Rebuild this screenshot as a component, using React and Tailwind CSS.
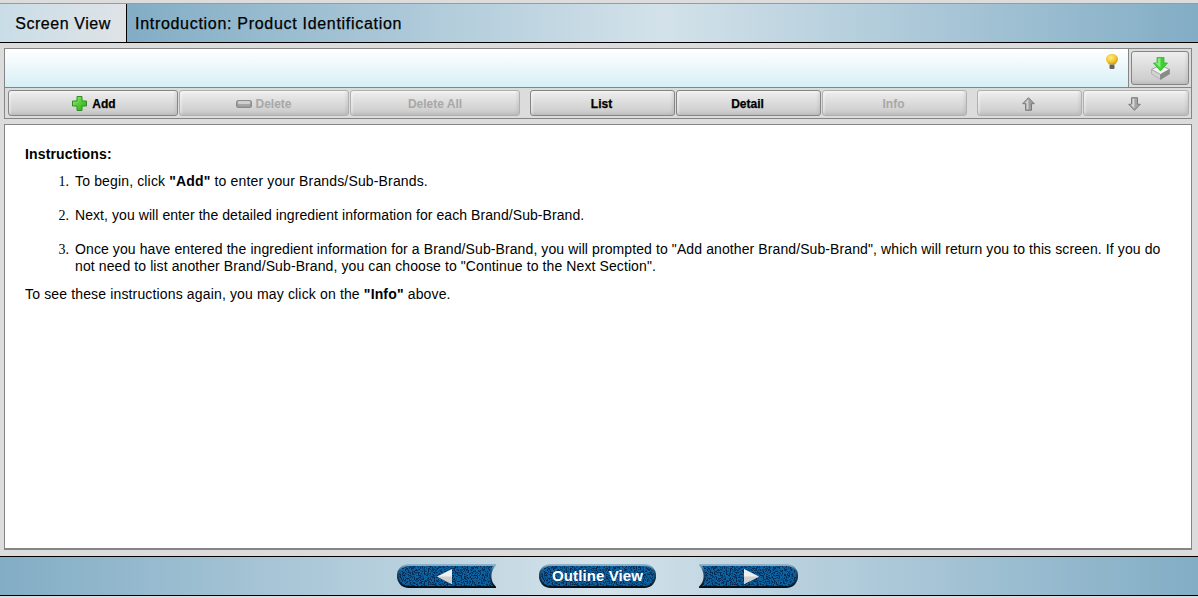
import React from 'react';

const FONT = "font-['Liberation_Sans',Arial,sans-serif]";

const BTN_ON = 'text-black border-[#858585]';
const BTN_OFF = 'text-[#a8a8a8] border-[#b0b0b0]';

function PlusIcon() {
  return (
    <svg width="15" height="15" viewBox="0 0 15 15">
      <defs>
        <linearGradient id="plusFill" x1="0" y1="0" x2="1" y2="1">
          <stop offset="0" stopColor="#a4ee7c" />
          <stop offset="0.5" stopColor="#4fd02e" />
          <stop offset="1" stopColor="#2fa51e" />
        </linearGradient>
      </defs>
      <path d="M5 .5h5v4.500h4.500v5h-4.500v4.500h-5v-4.500h-4.500v-5h4.500z" fill="url(#plusFill)" stroke="#2f8f24" />
    </svg>
  );
}

function MinusIcon() {
  return (
    <svg width="16" height="8" viewBox="0 0 16 8">
      <rect x="0" y="0" width="16" height="8" rx="2.500" fill="#8c8c8c" />
      <rect x="1.500" y="1" width="13" height="3" rx="1.500" fill="#cfcfcf" />
      <rect x="1.500" y="4" width="13" height="2.500" rx="1" fill="#a5a5a5" />
    </svg>
  );
}

function UpArrow() {
  return (
    <svg width="13" height="14" viewBox="0 0 13 14">
      <path d="M6.500 .7l5.800 6h-2.800v6.600h-6v-6.600h-2.800z" fill="#9d9d9d" stroke="#7c7c7c" />
      <path d="M6.500 2l-3.800 4h1.800v6.300h2z" fill="#d2d2d2" />
    </svg>
  );
}

function DownArrow() {
  return (
    <svg width="13" height="14" viewBox="0 0 13 14">
      <path d="M3.500 .7h6v6.600h2.800l-5.800 6-5.800-6h2.800z" fill="#a5a5a5" stroke="#7c7c7c" />
      <path d="M4.500 1.700h1.800v9.500l-3.600-3.700h1.800z" fill="#dadada" />
    </svg>
  );
}

function BulbIcon() {
  return (
    <svg width="12" height="15" viewBox="0 0 12 15">
      <defs>
        <radialGradient id="bulbFill" cx="0.400" cy="0.350" r="0.700">
          <stop offset="0" stopColor="#fdeb8a" />
          <stop offset="0.6" stopColor="#f4c62a" />
          <stop offset="1" stopColor="#cf930e" />
        </radialGradient>
      </defs>
      <path d="M6 0c3.300 0 6 2.200 6 5.200 0 2.300-2 3.400-2.800 5.300h-6.400c-.8-1.900-2.800-3-2.800-5.300 0-3 2.700-5.200 6-5.200z" fill="url(#bulbFill)" />
      <rect x="3.500" y="10.500" width="5" height="4.500" rx="1.200" fill="#66625a" />
    </svg>
  );
}

function DownloadIcon() {
  return (
    <svg width="19" height="23" viewBox="0 0 19 23">
      <path d="M.5 12.500l5-2.500h8l5 2.500-9 5z" fill="#f3f3f3" stroke="#a0a0a0" />
      <path d="M.5 12.500v4.500l9 5.500v-5z" fill="#d2d2d2" stroke="#a0a0a0" strokeWidth="0.600" />
      <path d="M18.500 12.500v4.500l-9 5.500v-5z" fill="#8a8a8a" stroke="#858585" strokeWidth="0.600" />
      <path d="M6 .5h7v5.500h3.500l-7 8-7-8h3.500z" fill="#3fce35" stroke="#36b52e" strokeWidth="0.800" />
      <path d="M6.800 1.300h2.700v10l-5-5.200h2.300z" fill="#86ec76" />
    </svg>
  );
}

// beveled toolbar button
function ToolBtn({ label, icon, off, className }) {
  return (
    <button
      className={`flex h-[26px] items-center justify-center rounded-[3px] border bg-gradient-to-b from-[#eeeeee] to-[#c9c9c9] pt-[1px] text-[12px] font-bold shadow-[inset_-2px_-2px_3px_rgba(0,0,0,0.07),inset_2px_2px_2px_rgba(255,255,255,0.35)] ${off ? BTN_OFF : `${BTN_ON} [-webkit-text-stroke:0.25px_black]`} ${className}`}
    >
      {icon}
      {label && <span>{label}</span>}
    </button>
  );
}

// speckled blue body with a light top rim and dark bottom rim
function NavShape({ d, id, w }) {
  return (
    <svg className="absolute inset-0" width={w} height="24" viewBox={`0 0 ${w} 24`}>
      <defs>
        <linearGradient id={`${id}Rim`} x1="0" y1="0" x2="0" y2="1">
          <stop offset="0" stopColor="#8fb2c8" />
          <stop offset="0.25" stopColor="#24567c" />
          <stop offset="1" stopColor="#01101d" />
        </linearGradient>
        <filter id={id} x="0" y="0" width="100%" height="100%" colorInterpolationFilters="sRGB">
          <feTurbulence type="fractalNoise" baseFrequency="0.7" numOctaves="2" seed="4" result="noise" />
          <feColorMatrix in="noise" values="0 0 0 0 0.02  0 0 0 0 0.16  0 0 0 0 0.32  7 0 0 0 -3.300" result="specks" />
          <feComposite in="specks" in2="SourceGraphic" operator="in" result="clipped" />
          <feMerge>
            <feMergeNode in="SourceGraphic" />
            <feMergeNode in="clipped" />
          </feMerge>
        </filter>
      </defs>
      <path d={d} fill="#0d62a0" filter={`url(#${id})`} />
      <path d={d} fill="none" stroke={`url(#${id}Rim)`} strokeWidth="1.800" />
    </svg>
  );
}

function App() {
  return (
    <div className={`flex h-[598px] w-[1198px] flex-col overflow-hidden bg-[#dcdcdc] ${FONT}`}>
      {/* Title bar */}
      <div className="mt-[3px] flex h-[40px] border-y border-t-[#9a9a9a] border-b-black">
        <div className="flex w-[127px] items-center justify-center border-r border-black bg-gradient-to-r from-[#c9dde8] to-[#dfe3e6] pt-[2px] text-[16px] tracking-[0.55px] text-black [-webkit-text-stroke:0.25px_black]">
          Screen View
        </div>
        <div className="flex flex-1 items-center bg-gradient-to-r from-[#82adc5] via-[#d3e2ea] to-[#82adc5] pl-[8px] pt-[2px] text-[16px] tracking-[0.7px] text-black [-webkit-text-stroke:0.25px_black]">
          Introduction: Product Identification
        </div>
      </div>

      {/* Toolbar panel */}
      <div className="ml-[4px] mr-[6px] mt-[5px] h-[71px] border border-[#858585]">
        <div className="flex h-[39px] border-b border-[#858585]">
          <div className="flex flex-1 justify-end bg-gradient-to-b from-white to-[#d6eff5] pr-[10px] pt-[5px]">
            <BulbIcon />
          </div>
          <div className="flex w-[63px] items-start border-l border-[#858585] bg-[#dcdcdc] pl-[2px] pt-[2px]">
            <button className="flex h-[34px] w-[58px] items-center justify-center rounded-[3px] border border-[#858585] bg-gradient-to-b from-[#eeeeee] to-[#c9c9c9] shadow-[inset_-2px_-2px_3px_rgba(0,0,0,0.07)]">
              <DownloadIcon />
            </button>
          </div>
        </div>
        <div className="flex h-[30px] items-center pl-[3px]">
          <ToolBtn label="Add" icon={<PlusIcon />} className="w-[170px] gap-[5px] pl-[2px]" />
          <ToolBtn label="Delete" icon={<MinusIcon />} off className="ml-[1px] w-[170px] gap-[3px]" />
          <ToolBtn label="Delete All" off className="ml-[1px] w-[170px]" />
          <ToolBtn label="List" className="ml-[10px] w-[145px] pr-[2px]" />
          <ToolBtn label="Detail" className="ml-[1px] w-[145px] pr-[2px]" />
          <ToolBtn label="Info" off className="ml-[1px] w-[145px] pr-[2px]" />
          <ToolBtn icon={<UpArrow />} off className="ml-[10px] w-[105px] pr-[2px]" />
          <ToolBtn icon={<DownArrow />} off className="ml-[1px] w-[106px] pr-[3px]" />
        </div>
      </div>

      {/* Instructions */}
      <div className="ml-[4px] mr-[6px] mt-[5px] h-[426px] border border-b-2 border-[#858585] bg-white px-[20px] pt-[21px] text-[14px] leading-[17px] tracking-[0.15px] text-black">
        <p className="font-bold">Instructions:</p>
        <ol className="mt-[10px] pl-[30px]">
          <li className="mb-[17px] flex">
            <span className="w-[20px] shrink-0 pt-[1px] pr-[6px] text-right font-['Liberation_Serif',serif] leading-[16px] tracking-normal">1.</span>
            <span>
              To begin, click <b>"Add"</b> to enter your Brands/Sub-Brands.
            </span>
          </li>
          <li className="mb-[17px] flex">
            <span className="w-[20px] shrink-0 pt-[1px] pr-[6px] text-right font-['Liberation_Serif',serif] leading-[16px] tracking-normal">2.</span>
            <span className="tracking-[0.07px]">Next, you will enter the detailed ingredient information for each Brand/Sub-Brand.</span>
          </li>
          <li className="flex">
            <span className="w-[20px] shrink-0 pt-[1px] pr-[6px] text-right font-['Liberation_Serif',serif] leading-[16px] tracking-normal">3.</span>
            <span className="tracking-[0.1px]">
              Once you have entered the ingredient information for a Brand/Sub-Brand, you will prompted to "Add another Brand/Sub-Brand", which will return you to this screen. If you do not need to list another Brand/Sub-Brand, you can choose to "Continue to the Next Section".
            </span>
          </li>
        </ol>
        <p className="mt-[11px]">
          To see these instructions again, you may click on the <b>"Info"</b> above.
        </p>
      </div>

      {/* Footer nav */}
      <div className="mt-[6px] flex h-[40px] items-center justify-center border-y border-black bg-gradient-to-r from-[#82adc5] via-[#d3e2ea] to-[#82adc5] pr-[3px]">
        <button className="relative flex h-[24px] w-[99px] items-center justify-center">
          <NavShape id="navPrev" w={99} d="M12 1H98C92 7 92 17 98 23H12C-3 23-3 1 12 1z" />
          <svg className="relative -ml-[5px]" width="15" height="15" viewBox="0 0 15 15">
            <path d="M15 0v15L0 7.500z" fill="#efefef" />
            <path d="M15 7.500v7.500L0 7.500z" fill="#cfcfcf" />
          </svg>
        </button>
        <button className="relative ml-[43px] flex h-[24px] w-[117px] items-center justify-center">
          <NavShape id="navMid" w={117} d="M12 1H105C120 1 120 23 105 23H12C-3 23-3 1 12 1z" />
          <span className="relative text-[15px] font-bold tracking-[0.1px] text-white">Outline View</span>
        </button>
        <button className="relative ml-[43px] flex h-[24px] w-[99px] items-center justify-center">
          <NavShape id="navNext" w={99} d="M87 1H1C7 7 7 17 1 23H87C102 23 102 1 87 1z" />
          <svg className="relative ml-[5px]" width="15" height="15" viewBox="0 0 15 15">
            <path d="M0 0v15l15-7.500z" fill="#efefef" />
            <path d="M0 7.500v7.500l15-7.500z" fill="#cfcfcf" />
          </svg>
        </button>
      </div>
    </div>
  );
}

export default App;
